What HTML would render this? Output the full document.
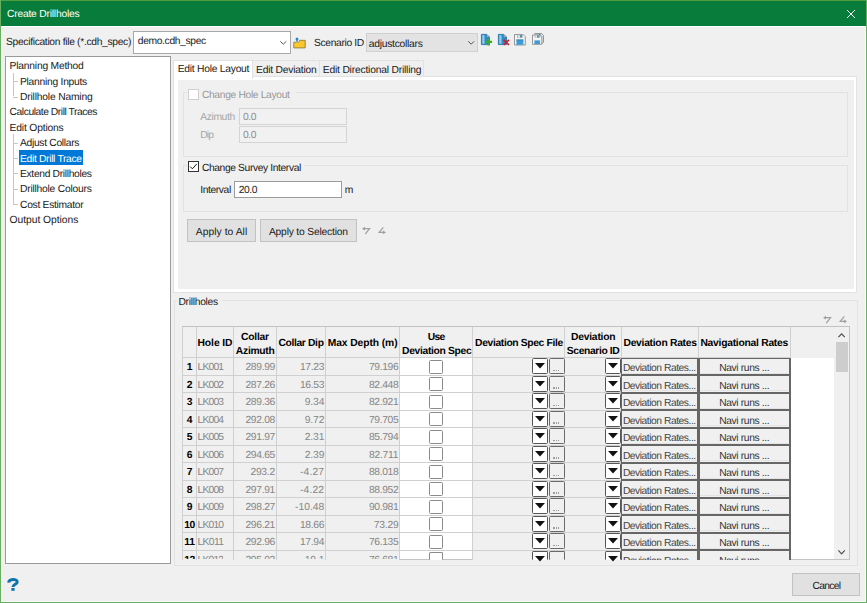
<!DOCTYPE html>
<html><head><meta charset="utf-8"><title>Create Drillholes</title>
<style>
html,body{margin:0;padding:0;}
body{width:867px;height:603px;overflow:hidden;background:#f0f0f0;position:relative;font-family:"Liberation Sans",sans-serif;font-size:10.3px;color:#1a1a1a;text-rendering:geometricPrecision;}
.b{position:absolute;box-sizing:border-box;}
.t{position:absolute;white-space:pre;line-height:13px;}
svg{position:absolute;overflow:visible;}
</style></head><body>
<div class="b" style="left:0.00px;top:0.00px;width:867.00px;height:25.60px;background:#077c3b;"></div>
<div class="b" style="left:0.00px;top:0.00px;width:867.00px;height:1.10px;background:#4f9d3f;"></div>
<div class="b" style="left:0.00px;top:25.60px;width:867.00px;height:1.60px;background:#ffffff;"></div>
<div class="b" style="left:0.00px;top:26.00px;width:2.20px;height:577.00px;background:#fbfbfb;"></div>
<div class="b" style="left:864.80px;top:26.00px;width:2.20px;height:577.00px;background:#fbfbfb;"></div>
<div class="b" style="left:0.00px;top:601.10px;width:867.00px;height:1.90px;background:#fbfbfb;"></div>
<div class="b" style="left:0.00px;top:0.00px;width:1.00px;height:603.00px;background:#68b061;"></div>
<div class="b" style="left:866.00px;top:0.00px;width:1.00px;height:603.00px;background:#68b061;"></div>
<div class="b" style="left:0.00px;top:602.00px;width:867.00px;height:1.00px;background:#68b061;"></div>
<svg style="left:847px;top:10px" width="8" height="8" viewBox="0 0 8 8"><path d="M0 0L8 8M8 0L0 8" stroke="#fff" stroke-width="1" fill="none"/></svg>
<div class="b" style="left:133.00px;top:31.00px;width:158.00px;height:22.50px;background:#fff;border:1px solid #a8a8a8;"></div>
<svg style="left:279.6px;top:40.6px" width="6.6" height="3.6" viewBox="0 0 6.6 3.6"><path d="M0.3 0.3L3.3 3.2L6.3 0.3" stroke="#444" stroke-width="0.9" fill="none"/></svg>
<svg style="left:293.3px;top:36.7px" width="12.8" height="11.8" viewBox="0 0 12.8 11.8"><path d="M0.8 5.2H5.6L6.8 3.3H12.2V10.9H0.8Z" fill="#fcc62d" stroke="#8f7d36" stroke-width="0.9" stroke-linejoin="round"/><path d="M4 0L6.4 2.6H5V5H3V2.6H1.6Z" fill="#107fc0" stroke="#e8f2f8" stroke-width="0.5"/></svg>
<div class="b" style="left:365.80px;top:33.00px;width:112.70px;height:18.80px;background:#e3e3e3;border:1px solid #d0d0d0;"></div>
<svg style="left:468px;top:40.6px" width="6.4" height="3.6" viewBox="0 0 6.4 3.6"><path d="M0.3 0.3L3.2 3.2L6.1 0.3" stroke="#444" stroke-width="0.9" fill="none"/></svg>
<svg style="left:481.0px;top:33.9px" width="12" height="12" viewBox="0 0 12 12"><path d="M0.4 0.4H5.8L8.5 3.1V10.6H0.4Z" fill="#2e8bc6" stroke="#1c6ea6" stroke-width="0.8"/><path d="M1.2 1.2H3.6V9.8H1.2Z" fill="#7cc0e8"/><path d="M1.6 2H3.2M1.6 3.8H3.2M1.6 5.6H3.2M1.6 7.4H3.2M1.6 9H3.2" stroke="#b6def5" stroke-width="0.7"/><path d="M5.8 0.4L8.5 3.1H5.8Z" fill="#a8a8a8"/><path d="M7.7 4.5V11.6M4.1 7.9H11.1" stroke="#3fa732" stroke-width="2.2" fill="none"/></svg>
<svg style="left:498.0px;top:33.9px" width="12" height="12" viewBox="0 0 12 12"><path d="M0.4 0.4H5.8L8.5 3.1V10.6H0.4Z" fill="#2e8bc6" stroke="#1c6ea6" stroke-width="0.8"/><path d="M1.2 1.2H3.6V9.8H1.2Z" fill="#7cc0e8"/><path d="M1.6 2H3.2M1.6 3.8H3.2M1.6 5.6H3.2M1.6 7.4H3.2M1.6 9H3.2" stroke="#b6def5" stroke-width="0.7"/><path d="M5.8 0.4L8.5 3.1H5.8Z" fill="#a8a8a8"/><path d="M5.7 5.9L11 11M11 5.9L5.7 11" stroke="#cc1f2b" stroke-width="1.7" fill="none"/></svg>
<svg style="left:514.3px;top:33.5px" width="12" height="11.6" viewBox="0 0 12 11.6"><path d="M0.5 0.5H9.2L11.3 2.6V11H0.5Z" fill="#f4f4f4" stroke="#8c8c8c" stroke-width="0.9"/><rect x="2.4" y="5.6" width="7" height="5.2" fill="#3d9bd6"/><rect x="2.4" y="5.6" width="7" height="0.7" fill="#2b78ad"/><rect x="3" y="0.6" width="5.6" height="3.4" fill="#a9adb0"/><rect x="3.8" y="1.2" width="2" height="2.6" fill="#e8e8e8"/><rect x="6.2" y="1" width="1.7" height="2.2" fill="#2f8dc9"/></svg>
<svg style="left:531.5px;top:33.4px" width="12" height="11.8" viewBox="0 0 12 11.8"><path d="M2.4 0.5H9.6L11.5 2.4V9.4L10 10.6" fill="#e2e2e2" stroke="#8c8c8c" stroke-width="0.9"/><path d="M0.5 2H8.2L9.8 3.6V11.3H0.5Z" fill="#f4f4f4" stroke="#8c8c8c" stroke-width="0.9"/><rect x="2.4" y="7.4" width="5.6" height="3.6" fill="#3d9bd6"/><rect x="2.6" y="1.2" width="5.8" height="3.4" fill="#a9adb0"/><rect x="3.4" y="2.6" width="1.8" height="1.8" fill="#e8e8e8"/><rect x="5.2" y="2.6" width="1.5" height="2" fill="#2f8dc9"/><rect x="7" y="0.9" width="1.3" height="1.4" fill="#2f8dc9"/></svg>
<div class="b" style="left:5.40px;top:56.00px;width:165.80px;height:508.00px;background:#fff;border:1px solid #9a9a9a;"></div>
<div class="b" style="left:18.50px;top:150.40px;width:64.00px;height:14.40px;background:#0078d7;"></div>
<div class="b" style="left:13.40px;top:81.27px;width:4.80px;height:0.90px;background:#c6c6c6;"></div>
<div class="b" style="left:13.40px;top:96.64px;width:4.80px;height:0.90px;background:#c6c6c6;"></div>
<div class="b" style="left:13.40px;top:142.75px;width:4.80px;height:0.90px;background:#c6c6c6;"></div>
<div class="b" style="left:13.40px;top:158.12px;width:4.80px;height:0.90px;background:#c6c6c6;"></div>
<div class="b" style="left:13.40px;top:173.49px;width:4.80px;height:0.90px;background:#c6c6c6;"></div>
<div class="b" style="left:13.40px;top:188.86px;width:4.80px;height:0.90px;background:#c6c6c6;"></div>
<div class="b" style="left:13.40px;top:204.23px;width:4.80px;height:0.90px;background:#c6c6c6;"></div>
<div class="b" style="left:13.20px;top:72.50px;width:0.90px;height:23.70px;background:#c6c6c6;"></div>
<div class="b" style="left:13.20px;top:134.00px;width:0.90px;height:69.80px;background:#c6c6c6;"></div>
<div class="b" style="left:172.80px;top:76.00px;width:684.00px;height:217.00px;background:#fff;border:1px solid #e2e2e2;"></div>
<div class="b" style="left:177.80px;top:80.00px;width:676.40px;height:209.40px;background:#f0f0f0;"></div>
<div class="b" style="left:172.80px;top:59.60px;width:80.50px;height:19.00px;background:#fff;border:1px solid #e2e2e2;border-bottom:none;"></div>
<div class="b" style="left:253.30px;top:60.40px;width:66.60px;height:15.80px;background:#f0f0f0;border:1px solid #e2e2e2;border-bottom:none;border-left:none;"></div>
<div class="b" style="left:319.90px;top:60.40px;width:104.60px;height:15.80px;background:#f0f0f0;border:1px solid #e2e2e2;border-bottom:none;border-left:none;"></div>
<div class="b" style="left:183.30px;top:92.00px;width:665.00px;height:65.20px;border:1px solid #e2e2e2;"></div>
<div class="b" style="left:186.50px;top:88.00px;width:109.00px;height:12.00px;background:#f0f0f0;"></div>
<div class="b" style="left:188.30px;top:88.60px;width:11.00px;height:11.00px;background:#fff;border:1px solid #cfcfcf;"></div>
<div class="b" style="left:238.70px;top:108.00px;width:108.00px;height:17.20px;background:#f1f1f1;border:1px solid #d4d4d4;"></div>
<div class="b" style="left:238.70px;top:125.80px;width:108.00px;height:17.00px;background:#f1f1f1;border:1px solid #d4d4d4;"></div>
<div class="b" style="left:183.30px;top:165.00px;width:665.00px;height:47.20px;border:1px solid #e2e2e2;"></div>
<div class="b" style="left:186.50px;top:160.50px;width:117.00px;height:12.50px;background:#f0f0f0;"></div>
<div class="b" style="left:188.30px;top:161.30px;width:11.00px;height:11.00px;background:#fff;border:1px solid #333;"></div>
<svg style="left:188.3px;top:161.3px" width="11" height="11" viewBox="0 0 11 11"><path d="M2.2 5.6L4.4 7.8L8.8 2.9" stroke="#111" stroke-width="1" fill="none"/></svg>
<div class="b" style="left:234.30px;top:180.50px;width:108.00px;height:17.70px;background:#fff;border:1px solid #9c9c9c;"></div>
<div class="b" style="left:187.00px;top:219.10px;width:69.00px;height:22.60px;background:#e1e1e1;border:1px solid #c2c2c2;"></div>
<div class="b" style="left:260.00px;top:219.10px;width:96.80px;height:22.60px;background:#e1e1e1;border:1px solid #c2c2c2;"></div>
<svg style="left:362.0px;top:226.7px" width="8.2" height="7.8" viewBox="0 0 8.2 7.8"><path d="M1.2 1.6H7.6L3.2 7.2" stroke="#a0a0a0" stroke-width="1.25" fill="none"/><path d="M0 1.7L3 -0.2V3.6Z" fill="#a0a0a0"/></svg>
<svg style="left:378.2px;top:226.9px" width="8" height="7.4" viewBox="0 0 8 7.4"><path d="M5.3 0.4L1.2 5.4H6.6" stroke="#a0a0a0" stroke-width="1.25" fill="none"/><path d="M8 5.4L5 3.5V7.3Z" fill="#a0a0a0"/></svg>
<div class="b" style="left:173.60px;top:300.30px;width:684.00px;height:266.00px;border:1px solid #e2e2e2;"></div>
<div class="b" style="left:176.50px;top:295.00px;width:45.00px;height:12.00px;background:#f0f0f0;"></div>
<svg style="left:822.6px;top:315.6px" width="8.2" height="7.8" viewBox="0 0 8.2 7.8"><path d="M1.2 1.6H7.6L3.2 7.2" stroke="#a0a0a0" stroke-width="1.25" fill="none"/><path d="M0 1.7L3 -0.2V3.6Z" fill="#a0a0a0"/></svg>
<svg style="left:838.8px;top:315.8px" width="8" height="7.4" viewBox="0 0 8 7.4"><path d="M5.3 0.4L1.2 5.4H6.6" stroke="#a0a0a0" stroke-width="1.25" fill="none"/><path d="M8 5.4L5 3.5V7.3Z" fill="#a0a0a0"/></svg>
<div class="b" style="left:181.60px;top:326.40px;width:668.20px;height:234.00px;background:#fff;border:1px solid #c4c4c4;"></div>
<div class="b" style="left:181.60px;top:326.40px;width:668.20px;height:1.80px;background:#c2c2c2;"></div>
<div class="b" style="left:181.60px;top:326.40px;width:1.60px;height:234.00px;background:#c2c2c2;"></div>
<div class="b" style="left:182.60px;top:327.40px;width:651.80px;height:30.40px;background:#f0f0f0;"></div>
<div class="b" style="left:834.30px;top:327.40px;width:14.60px;height:232.00px;background:#f0f0f0;"></div>
<div class="b" style="left:835.80px;top:342.00px;width:12.20px;height:29.60px;background:#cdcdcd;"></div>
<svg style="left:838.3px;top:332.8px" width="7.2" height="4.6" viewBox="0 0 7.2 4.6"><path d="M0.4 4.2L3.6 0.8L6.8 4.2" stroke="#505050" stroke-width="1.2" fill="none"/></svg>
<svg style="left:838.3px;top:550.4px" width="7.2" height="4.6" viewBox="0 0 7.2 4.6"><path d="M0.4 0.4L3.6 3.8L6.8 0.4" stroke="#505050" stroke-width="1.2" fill="none"/></svg>
<div class="b" style="left:182.40px;top:357.50px;width:217.20px;height:17.50px;background:#f0f0f0;"></div>
<div class="b" style="left:472.30px;top:357.50px;width:149.20px;height:17.50px;background:#f0f0f0;"></div>
<div class="b" style="left:182.40px;top:375.00px;width:217.20px;height:17.50px;background:#f0f0f0;"></div>
<div class="b" style="left:472.30px;top:375.00px;width:149.20px;height:17.50px;background:#f0f0f0;"></div>
<div class="b" style="left:182.40px;top:392.50px;width:217.20px;height:17.50px;background:#f0f0f0;"></div>
<div class="b" style="left:472.30px;top:392.50px;width:149.20px;height:17.50px;background:#f0f0f0;"></div>
<div class="b" style="left:182.40px;top:410.00px;width:217.20px;height:17.50px;background:#f0f0f0;"></div>
<div class="b" style="left:472.30px;top:410.00px;width:149.20px;height:17.50px;background:#f0f0f0;"></div>
<div class="b" style="left:182.40px;top:427.50px;width:217.20px;height:17.50px;background:#f0f0f0;"></div>
<div class="b" style="left:472.30px;top:427.50px;width:149.20px;height:17.50px;background:#f0f0f0;"></div>
<div class="b" style="left:182.40px;top:445.00px;width:217.20px;height:17.50px;background:#f0f0f0;"></div>
<div class="b" style="left:472.30px;top:445.00px;width:149.20px;height:17.50px;background:#f0f0f0;"></div>
<div class="b" style="left:182.40px;top:462.50px;width:217.20px;height:17.50px;background:#f0f0f0;"></div>
<div class="b" style="left:472.30px;top:462.50px;width:149.20px;height:17.50px;background:#f0f0f0;"></div>
<div class="b" style="left:182.40px;top:480.00px;width:217.20px;height:17.50px;background:#f0f0f0;"></div>
<div class="b" style="left:472.30px;top:480.00px;width:149.20px;height:17.50px;background:#f0f0f0;"></div>
<div class="b" style="left:182.40px;top:497.50px;width:217.20px;height:17.50px;background:#f0f0f0;"></div>
<div class="b" style="left:472.30px;top:497.50px;width:149.20px;height:17.50px;background:#f0f0f0;"></div>
<div class="b" style="left:182.40px;top:515.00px;width:217.20px;height:17.50px;background:#f0f0f0;"></div>
<div class="b" style="left:472.30px;top:515.00px;width:149.20px;height:17.50px;background:#f0f0f0;"></div>
<div class="b" style="left:182.40px;top:532.50px;width:217.20px;height:17.50px;background:#f0f0f0;"></div>
<div class="b" style="left:472.30px;top:532.50px;width:149.20px;height:17.50px;background:#f0f0f0;"></div>
<div class="b" style="left:182.40px;top:550.00px;width:217.20px;height:9.60px;background:#f0f0f0;"></div>
<div class="b" style="left:472.30px;top:550.00px;width:149.20px;height:9.60px;background:#f0f0f0;"></div>
<div class="b" style="left:182.40px;top:357.00px;width:607.60px;height:1.00px;background:#d0d0d0;"></div>
<div class="b" style="left:182.40px;top:374.50px;width:607.60px;height:1.00px;background:#d0d0d0;"></div>
<div class="b" style="left:182.40px;top:392.00px;width:607.60px;height:1.00px;background:#d0d0d0;"></div>
<div class="b" style="left:182.40px;top:409.50px;width:607.60px;height:1.00px;background:#d0d0d0;"></div>
<div class="b" style="left:182.40px;top:427.00px;width:607.60px;height:1.00px;background:#d0d0d0;"></div>
<div class="b" style="left:182.40px;top:444.50px;width:607.60px;height:1.00px;background:#d0d0d0;"></div>
<div class="b" style="left:182.40px;top:462.00px;width:607.60px;height:1.00px;background:#d0d0d0;"></div>
<div class="b" style="left:182.40px;top:479.50px;width:607.60px;height:1.00px;background:#d0d0d0;"></div>
<div class="b" style="left:182.40px;top:497.00px;width:607.60px;height:1.00px;background:#d0d0d0;"></div>
<div class="b" style="left:182.40px;top:514.50px;width:607.60px;height:1.00px;background:#d0d0d0;"></div>
<div class="b" style="left:182.40px;top:532.00px;width:607.60px;height:1.00px;background:#d0d0d0;"></div>
<div class="b" style="left:182.40px;top:549.50px;width:607.60px;height:1.00px;background:#d0d0d0;"></div>
<div class="b" style="left:195.70px;top:327.40px;width:1.00px;height:232.20px;background:#d0d0d0;"></div>
<div class="b" style="left:233.20px;top:327.40px;width:1.00px;height:232.20px;background:#d0d0d0;"></div>
<div class="b" style="left:275.60px;top:327.40px;width:1.00px;height:232.20px;background:#d0d0d0;"></div>
<div class="b" style="left:324.80px;top:327.40px;width:1.00px;height:232.20px;background:#d0d0d0;"></div>
<div class="b" style="left:399.10px;top:327.40px;width:1.00px;height:232.20px;background:#d0d0d0;"></div>
<div class="b" style="left:471.80px;top:327.40px;width:1.00px;height:232.20px;background:#d0d0d0;"></div>
<div class="b" style="left:564.10px;top:327.40px;width:1.00px;height:232.20px;background:#d0d0d0;"></div>
<div class="b" style="left:621.00px;top:327.40px;width:1.00px;height:232.20px;background:#d0d0d0;"></div>
<div class="b" style="left:698.10px;top:327.40px;width:1.00px;height:232.20px;background:#d0d0d0;"></div>
<div class="b" style="left:789.50px;top:327.40px;width:1.00px;height:232.20px;background:#d0d0d0;"></div>
<div class="b" style="left:182.10px;top:327.40px;width:0.80px;height:232.20px;background:#d0d0d0;"></div>
<div class="b" style="left:429.30px;top:359.70px;width:14.00px;height:14.00px;background:#fff;border:1px solid #8a8a8a;border-radius:1.5px;"></div>
<div class="b" style="left:531.80px;top:358.40px;width:15.80px;height:16.00px;background:#fff;border:1px solid #555;border-radius:1.5px;"></div>
<svg style="left:534.7px;top:363.4px" width="10" height="5.6" viewBox="0 0 10 5.6"><path d="M0 0H10L5 5.6Z" fill="#111"/></svg>
<div class="b" style="left:605.30px;top:358.40px;width:15.80px;height:16.00px;background:#fff;border:1px solid #555;border-radius:1.5px;"></div>
<svg style="left:608.2px;top:363.4px" width="10" height="5.6" viewBox="0 0 10 5.6"><path d="M0 0H10L5 5.6Z" fill="#111"/></svg>
<div class="b" style="left:549.00px;top:358.40px;width:15.60px;height:16.00px;background:#f0f0f0;border:1px solid #6a6a6a;border-radius:1.5px;"></div>
<div class="b" style="left:553.30px;top:369.80px;width:1.30px;height:1.40px;background:#9e9e9e;"></div>
<div class="b" style="left:555.60px;top:369.80px;width:1.30px;height:1.40px;background:#9e9e9e;"></div>
<div class="b" style="left:557.90px;top:369.80px;width:1.30px;height:1.40px;background:#9e9e9e;"></div>
<div class="b" style="left:621.50px;top:357.50px;width:168.50px;height:17.50px;background:#f0f0f0;"></div>
<div class="b" style="left:623.00px;top:372.70px;width:74.10px;height:0.80px;background:#e3e3e3;"></div>
<div class="b" style="left:700.10px;top:372.70px;width:88.40px;height:0.80px;background:#e3e3e3;"></div>
<div class="b" style="left:429.30px;top:377.20px;width:14.00px;height:14.00px;background:#fff;border:1px solid #8a8a8a;border-radius:1.5px;"></div>
<div class="b" style="left:531.80px;top:375.90px;width:15.80px;height:16.00px;background:#fff;border:1px solid #555;border-radius:1.5px;"></div>
<svg style="left:534.7px;top:380.9px" width="10" height="5.6" viewBox="0 0 10 5.6"><path d="M0 0H10L5 5.6Z" fill="#111"/></svg>
<div class="b" style="left:605.30px;top:375.90px;width:15.80px;height:16.00px;background:#fff;border:1px solid #555;border-radius:1.5px;"></div>
<svg style="left:608.2px;top:380.9px" width="10" height="5.6" viewBox="0 0 10 5.6"><path d="M0 0H10L5 5.6Z" fill="#111"/></svg>
<div class="b" style="left:549.00px;top:375.90px;width:15.60px;height:16.00px;background:#f0f0f0;border:1px solid #6a6a6a;border-radius:1.5px;"></div>
<div class="b" style="left:553.30px;top:387.30px;width:1.30px;height:1.40px;background:#9e9e9e;"></div>
<div class="b" style="left:555.60px;top:387.30px;width:1.30px;height:1.40px;background:#9e9e9e;"></div>
<div class="b" style="left:557.90px;top:387.30px;width:1.30px;height:1.40px;background:#9e9e9e;"></div>
<div class="b" style="left:621.50px;top:375.00px;width:168.50px;height:17.50px;background:#f0f0f0;"></div>
<div class="b" style="left:623.00px;top:390.20px;width:74.10px;height:0.80px;background:#e3e3e3;"></div>
<div class="b" style="left:700.10px;top:390.20px;width:88.40px;height:0.80px;background:#e3e3e3;"></div>
<div class="b" style="left:429.30px;top:394.70px;width:14.00px;height:14.00px;background:#fff;border:1px solid #8a8a8a;border-radius:1.5px;"></div>
<div class="b" style="left:531.80px;top:393.40px;width:15.80px;height:16.00px;background:#fff;border:1px solid #555;border-radius:1.5px;"></div>
<svg style="left:534.7px;top:398.4px" width="10" height="5.6" viewBox="0 0 10 5.6"><path d="M0 0H10L5 5.6Z" fill="#111"/></svg>
<div class="b" style="left:605.30px;top:393.40px;width:15.80px;height:16.00px;background:#fff;border:1px solid #555;border-radius:1.5px;"></div>
<svg style="left:608.2px;top:398.4px" width="10" height="5.6" viewBox="0 0 10 5.6"><path d="M0 0H10L5 5.6Z" fill="#111"/></svg>
<div class="b" style="left:549.00px;top:393.40px;width:15.60px;height:16.00px;background:#f0f0f0;border:1px solid #6a6a6a;border-radius:1.5px;"></div>
<div class="b" style="left:553.30px;top:404.80px;width:1.30px;height:1.40px;background:#9e9e9e;"></div>
<div class="b" style="left:555.60px;top:404.80px;width:1.30px;height:1.40px;background:#9e9e9e;"></div>
<div class="b" style="left:557.90px;top:404.80px;width:1.30px;height:1.40px;background:#9e9e9e;"></div>
<div class="b" style="left:621.50px;top:392.50px;width:168.50px;height:17.50px;background:#f0f0f0;"></div>
<div class="b" style="left:623.00px;top:407.70px;width:74.10px;height:0.80px;background:#e3e3e3;"></div>
<div class="b" style="left:700.10px;top:407.70px;width:88.40px;height:0.80px;background:#e3e3e3;"></div>
<div class="b" style="left:429.30px;top:412.20px;width:14.00px;height:14.00px;background:#fff;border:1px solid #8a8a8a;border-radius:1.5px;"></div>
<div class="b" style="left:531.80px;top:410.90px;width:15.80px;height:16.00px;background:#fff;border:1px solid #555;border-radius:1.5px;"></div>
<svg style="left:534.7px;top:415.9px" width="10" height="5.6" viewBox="0 0 10 5.6"><path d="M0 0H10L5 5.6Z" fill="#111"/></svg>
<div class="b" style="left:605.30px;top:410.90px;width:15.80px;height:16.00px;background:#fff;border:1px solid #555;border-radius:1.5px;"></div>
<svg style="left:608.2px;top:415.9px" width="10" height="5.6" viewBox="0 0 10 5.6"><path d="M0 0H10L5 5.6Z" fill="#111"/></svg>
<div class="b" style="left:549.00px;top:410.90px;width:15.60px;height:16.00px;background:#f0f0f0;border:1px solid #6a6a6a;border-radius:1.5px;"></div>
<div class="b" style="left:553.30px;top:422.30px;width:1.30px;height:1.40px;background:#9e9e9e;"></div>
<div class="b" style="left:555.60px;top:422.30px;width:1.30px;height:1.40px;background:#9e9e9e;"></div>
<div class="b" style="left:557.90px;top:422.30px;width:1.30px;height:1.40px;background:#9e9e9e;"></div>
<div class="b" style="left:621.50px;top:410.00px;width:168.50px;height:17.50px;background:#f0f0f0;"></div>
<div class="b" style="left:623.00px;top:425.20px;width:74.10px;height:0.80px;background:#e3e3e3;"></div>
<div class="b" style="left:700.10px;top:425.20px;width:88.40px;height:0.80px;background:#e3e3e3;"></div>
<div class="b" style="left:429.30px;top:429.70px;width:14.00px;height:14.00px;background:#fff;border:1px solid #8a8a8a;border-radius:1.5px;"></div>
<div class="b" style="left:531.80px;top:428.40px;width:15.80px;height:16.00px;background:#fff;border:1px solid #555;border-radius:1.5px;"></div>
<svg style="left:534.7px;top:433.4px" width="10" height="5.6" viewBox="0 0 10 5.6"><path d="M0 0H10L5 5.6Z" fill="#111"/></svg>
<div class="b" style="left:605.30px;top:428.40px;width:15.80px;height:16.00px;background:#fff;border:1px solid #555;border-radius:1.5px;"></div>
<svg style="left:608.2px;top:433.4px" width="10" height="5.6" viewBox="0 0 10 5.6"><path d="M0 0H10L5 5.6Z" fill="#111"/></svg>
<div class="b" style="left:549.00px;top:428.40px;width:15.60px;height:16.00px;background:#f0f0f0;border:1px solid #6a6a6a;border-radius:1.5px;"></div>
<div class="b" style="left:553.30px;top:439.80px;width:1.30px;height:1.40px;background:#9e9e9e;"></div>
<div class="b" style="left:555.60px;top:439.80px;width:1.30px;height:1.40px;background:#9e9e9e;"></div>
<div class="b" style="left:557.90px;top:439.80px;width:1.30px;height:1.40px;background:#9e9e9e;"></div>
<div class="b" style="left:621.50px;top:427.50px;width:168.50px;height:17.50px;background:#f0f0f0;"></div>
<div class="b" style="left:623.00px;top:442.70px;width:74.10px;height:0.80px;background:#e3e3e3;"></div>
<div class="b" style="left:700.10px;top:442.70px;width:88.40px;height:0.80px;background:#e3e3e3;"></div>
<div class="b" style="left:429.30px;top:447.20px;width:14.00px;height:14.00px;background:#fff;border:1px solid #8a8a8a;border-radius:1.5px;"></div>
<div class="b" style="left:531.80px;top:445.90px;width:15.80px;height:16.00px;background:#fff;border:1px solid #555;border-radius:1.5px;"></div>
<svg style="left:534.7px;top:450.9px" width="10" height="5.6" viewBox="0 0 10 5.6"><path d="M0 0H10L5 5.6Z" fill="#111"/></svg>
<div class="b" style="left:605.30px;top:445.90px;width:15.80px;height:16.00px;background:#fff;border:1px solid #555;border-radius:1.5px;"></div>
<svg style="left:608.2px;top:450.9px" width="10" height="5.6" viewBox="0 0 10 5.6"><path d="M0 0H10L5 5.6Z" fill="#111"/></svg>
<div class="b" style="left:549.00px;top:445.90px;width:15.60px;height:16.00px;background:#f0f0f0;border:1px solid #6a6a6a;border-radius:1.5px;"></div>
<div class="b" style="left:553.30px;top:457.30px;width:1.30px;height:1.40px;background:#9e9e9e;"></div>
<div class="b" style="left:555.60px;top:457.30px;width:1.30px;height:1.40px;background:#9e9e9e;"></div>
<div class="b" style="left:557.90px;top:457.30px;width:1.30px;height:1.40px;background:#9e9e9e;"></div>
<div class="b" style="left:621.50px;top:445.00px;width:168.50px;height:17.50px;background:#f0f0f0;"></div>
<div class="b" style="left:623.00px;top:460.20px;width:74.10px;height:0.80px;background:#e3e3e3;"></div>
<div class="b" style="left:700.10px;top:460.20px;width:88.40px;height:0.80px;background:#e3e3e3;"></div>
<div class="b" style="left:429.30px;top:464.70px;width:14.00px;height:14.00px;background:#fff;border:1px solid #8a8a8a;border-radius:1.5px;"></div>
<div class="b" style="left:531.80px;top:463.40px;width:15.80px;height:16.00px;background:#fff;border:1px solid #555;border-radius:1.5px;"></div>
<svg style="left:534.7px;top:468.4px" width="10" height="5.6" viewBox="0 0 10 5.6"><path d="M0 0H10L5 5.6Z" fill="#111"/></svg>
<div class="b" style="left:605.30px;top:463.40px;width:15.80px;height:16.00px;background:#fff;border:1px solid #555;border-radius:1.5px;"></div>
<svg style="left:608.2px;top:468.4px" width="10" height="5.6" viewBox="0 0 10 5.6"><path d="M0 0H10L5 5.6Z" fill="#111"/></svg>
<div class="b" style="left:549.00px;top:463.40px;width:15.60px;height:16.00px;background:#f0f0f0;border:1px solid #6a6a6a;border-radius:1.5px;"></div>
<div class="b" style="left:553.30px;top:474.80px;width:1.30px;height:1.40px;background:#9e9e9e;"></div>
<div class="b" style="left:555.60px;top:474.80px;width:1.30px;height:1.40px;background:#9e9e9e;"></div>
<div class="b" style="left:557.90px;top:474.80px;width:1.30px;height:1.40px;background:#9e9e9e;"></div>
<div class="b" style="left:621.50px;top:462.50px;width:168.50px;height:17.50px;background:#f0f0f0;"></div>
<div class="b" style="left:623.00px;top:477.70px;width:74.10px;height:0.80px;background:#e3e3e3;"></div>
<div class="b" style="left:700.10px;top:477.70px;width:88.40px;height:0.80px;background:#e3e3e3;"></div>
<div class="b" style="left:429.30px;top:482.20px;width:14.00px;height:14.00px;background:#fff;border:1px solid #8a8a8a;border-radius:1.5px;"></div>
<div class="b" style="left:531.80px;top:480.90px;width:15.80px;height:16.00px;background:#fff;border:1px solid #555;border-radius:1.5px;"></div>
<svg style="left:534.7px;top:485.9px" width="10" height="5.6" viewBox="0 0 10 5.6"><path d="M0 0H10L5 5.6Z" fill="#111"/></svg>
<div class="b" style="left:605.30px;top:480.90px;width:15.80px;height:16.00px;background:#fff;border:1px solid #555;border-radius:1.5px;"></div>
<svg style="left:608.2px;top:485.9px" width="10" height="5.6" viewBox="0 0 10 5.6"><path d="M0 0H10L5 5.6Z" fill="#111"/></svg>
<div class="b" style="left:549.00px;top:480.90px;width:15.60px;height:16.00px;background:#f0f0f0;border:1px solid #6a6a6a;border-radius:1.5px;"></div>
<div class="b" style="left:553.30px;top:492.30px;width:1.30px;height:1.40px;background:#9e9e9e;"></div>
<div class="b" style="left:555.60px;top:492.30px;width:1.30px;height:1.40px;background:#9e9e9e;"></div>
<div class="b" style="left:557.90px;top:492.30px;width:1.30px;height:1.40px;background:#9e9e9e;"></div>
<div class="b" style="left:621.50px;top:480.00px;width:168.50px;height:17.50px;background:#f0f0f0;"></div>
<div class="b" style="left:623.00px;top:495.20px;width:74.10px;height:0.80px;background:#e3e3e3;"></div>
<div class="b" style="left:700.10px;top:495.20px;width:88.40px;height:0.80px;background:#e3e3e3;"></div>
<div class="b" style="left:429.30px;top:499.70px;width:14.00px;height:14.00px;background:#fff;border:1px solid #8a8a8a;border-radius:1.5px;"></div>
<div class="b" style="left:531.80px;top:498.40px;width:15.80px;height:16.00px;background:#fff;border:1px solid #555;border-radius:1.5px;"></div>
<svg style="left:534.7px;top:503.4px" width="10" height="5.6" viewBox="0 0 10 5.6"><path d="M0 0H10L5 5.6Z" fill="#111"/></svg>
<div class="b" style="left:605.30px;top:498.40px;width:15.80px;height:16.00px;background:#fff;border:1px solid #555;border-radius:1.5px;"></div>
<svg style="left:608.2px;top:503.4px" width="10" height="5.6" viewBox="0 0 10 5.6"><path d="M0 0H10L5 5.6Z" fill="#111"/></svg>
<div class="b" style="left:549.00px;top:498.40px;width:15.60px;height:16.00px;background:#f0f0f0;border:1px solid #6a6a6a;border-radius:1.5px;"></div>
<div class="b" style="left:553.30px;top:509.80px;width:1.30px;height:1.40px;background:#9e9e9e;"></div>
<div class="b" style="left:555.60px;top:509.80px;width:1.30px;height:1.40px;background:#9e9e9e;"></div>
<div class="b" style="left:557.90px;top:509.80px;width:1.30px;height:1.40px;background:#9e9e9e;"></div>
<div class="b" style="left:621.50px;top:497.50px;width:168.50px;height:17.50px;background:#f0f0f0;"></div>
<div class="b" style="left:623.00px;top:512.70px;width:74.10px;height:0.80px;background:#e3e3e3;"></div>
<div class="b" style="left:700.10px;top:512.70px;width:88.40px;height:0.80px;background:#e3e3e3;"></div>
<div class="b" style="left:429.30px;top:517.20px;width:14.00px;height:14.00px;background:#fff;border:1px solid #8a8a8a;border-radius:1.5px;"></div>
<div class="b" style="left:531.80px;top:515.90px;width:15.80px;height:16.00px;background:#fff;border:1px solid #555;border-radius:1.5px;"></div>
<svg style="left:534.7px;top:520.9px" width="10" height="5.6" viewBox="0 0 10 5.6"><path d="M0 0H10L5 5.6Z" fill="#111"/></svg>
<div class="b" style="left:605.30px;top:515.90px;width:15.80px;height:16.00px;background:#fff;border:1px solid #555;border-radius:1.5px;"></div>
<svg style="left:608.2px;top:520.9px" width="10" height="5.6" viewBox="0 0 10 5.6"><path d="M0 0H10L5 5.6Z" fill="#111"/></svg>
<div class="b" style="left:549.00px;top:515.90px;width:15.60px;height:16.00px;background:#f0f0f0;border:1px solid #6a6a6a;border-radius:1.5px;"></div>
<div class="b" style="left:553.30px;top:527.30px;width:1.30px;height:1.40px;background:#9e9e9e;"></div>
<div class="b" style="left:555.60px;top:527.30px;width:1.30px;height:1.40px;background:#9e9e9e;"></div>
<div class="b" style="left:557.90px;top:527.30px;width:1.30px;height:1.40px;background:#9e9e9e;"></div>
<div class="b" style="left:621.50px;top:515.00px;width:168.50px;height:17.50px;background:#f0f0f0;"></div>
<div class="b" style="left:623.00px;top:530.20px;width:74.10px;height:0.80px;background:#e3e3e3;"></div>
<div class="b" style="left:700.10px;top:530.20px;width:88.40px;height:0.80px;background:#e3e3e3;"></div>
<div class="b" style="left:429.30px;top:534.70px;width:14.00px;height:14.00px;background:#fff;border:1px solid #8a8a8a;border-radius:1.5px;"></div>
<div class="b" style="left:531.80px;top:533.40px;width:15.80px;height:16.00px;background:#fff;border:1px solid #555;border-radius:1.5px;"></div>
<svg style="left:534.7px;top:538.4px" width="10" height="5.6" viewBox="0 0 10 5.6"><path d="M0 0H10L5 5.6Z" fill="#111"/></svg>
<div class="b" style="left:605.30px;top:533.40px;width:15.80px;height:16.00px;background:#fff;border:1px solid #555;border-radius:1.5px;"></div>
<svg style="left:608.2px;top:538.4px" width="10" height="5.6" viewBox="0 0 10 5.6"><path d="M0 0H10L5 5.6Z" fill="#111"/></svg>
<div class="b" style="left:549.00px;top:533.40px;width:15.60px;height:16.00px;background:#f0f0f0;border:1px solid #6a6a6a;border-radius:1.5px;"></div>
<div class="b" style="left:553.30px;top:544.80px;width:1.30px;height:1.40px;background:#9e9e9e;"></div>
<div class="b" style="left:555.60px;top:544.80px;width:1.30px;height:1.40px;background:#9e9e9e;"></div>
<div class="b" style="left:557.90px;top:544.80px;width:1.30px;height:1.40px;background:#9e9e9e;"></div>
<div class="b" style="left:621.50px;top:532.50px;width:168.50px;height:17.50px;background:#f0f0f0;"></div>
<div class="b" style="left:623.00px;top:547.70px;width:74.10px;height:0.80px;background:#e3e3e3;"></div>
<div class="b" style="left:700.10px;top:547.70px;width:88.40px;height:0.80px;background:#e3e3e3;"></div>
<div class="b" style="left:429.30px;top:552.20px;width:14.00px;height:7.40px;background:#fff;border:1px solid #8a8a8a;border-radius:1.5px;border-bottom:none;"></div>
<div class="b" style="left:531.80px;top:550.90px;width:15.80px;height:8.70px;background:#fff;border:1px solid #555;border-radius:1.5px;border-bottom:none;"></div>
<svg style="left:534.7px;top:555.9px" width="10" height="3.7" viewBox="0 0 10 3.7"><path d="M0 0H10L5 5.6Z" fill="#111"/></svg>
<div class="b" style="left:605.30px;top:550.90px;width:15.80px;height:8.70px;background:#fff;border:1px solid #555;border-radius:1.5px;border-bottom:none;"></div>
<svg style="left:608.2px;top:555.9px" width="10" height="3.7" viewBox="0 0 10 3.7"><path d="M0 0H10L5 5.6Z" fill="#111"/></svg>
<div class="b" style="left:549.00px;top:550.90px;width:15.60px;height:8.70px;background:#f0f0f0;border:1px solid #6a6a6a;border-radius:1.5px;border-bottom:none;"></div>
<div class="b" style="left:621.50px;top:550.00px;width:168.50px;height:9.60px;background:#f0f0f0;"></div>
<div class="b" style="left:620.90px;top:357.70px;width:169.70px;height:1.50px;background:#666666;"></div>
<div class="b" style="left:620.90px;top:374.40px;width:169.70px;height:2.00px;background:#666666;"></div>
<div class="b" style="left:620.90px;top:391.90px;width:169.70px;height:2.00px;background:#666666;"></div>
<div class="b" style="left:620.90px;top:409.40px;width:169.70px;height:2.00px;background:#666666;"></div>
<div class="b" style="left:620.90px;top:426.90px;width:169.70px;height:2.00px;background:#666666;"></div>
<div class="b" style="left:620.90px;top:444.40px;width:169.70px;height:2.00px;background:#666666;"></div>
<div class="b" style="left:620.90px;top:461.90px;width:169.70px;height:2.00px;background:#666666;"></div>
<div class="b" style="left:620.90px;top:479.40px;width:169.70px;height:2.00px;background:#666666;"></div>
<div class="b" style="left:620.90px;top:496.90px;width:169.70px;height:2.00px;background:#666666;"></div>
<div class="b" style="left:620.90px;top:514.40px;width:169.70px;height:2.00px;background:#666666;"></div>
<div class="b" style="left:620.90px;top:531.90px;width:169.70px;height:2.00px;background:#666666;"></div>
<div class="b" style="left:620.90px;top:549.40px;width:169.70px;height:2.00px;background:#666666;"></div>
<div class="b" style="left:620.80px;top:357.70px;width:1.50px;height:201.90px;background:#666666;"></div>
<div class="b" style="left:697.40px;top:357.70px;width:2.30px;height:201.90px;background:#666666;"></div>
<div class="b" style="left:789.00px;top:357.70px;width:1.60px;height:201.90px;background:#666666;"></div>
<div class="b" style="left:792.40px;top:573.40px;width:67.70px;height:22.80px;background:#e1e1e1;border:1px solid #c2c2c2;"></div>
<svg style="left:7.3px;top:578.2px" width="12" height="12.8" viewBox="0 0 12 12.8"><path d="M1.8 4.7C1.6 0.8 10.2 0.4 10.2 3.9C10.2 6.3 6 6.3 6 9.1" stroke="#0f73ae" stroke-width="3" fill="none"/><rect x="4.4" y="10" width="3.2" height="2.8" fill="#0f73ae"/></svg>
<span class="t" style="left:7.00px;top:7.80px;letter-spacing:-0.213px;color:#ffffff;">Create Drillholes</span>
<span class="t" style="left:6.00px;top:36.30px;letter-spacing:-0.325px;">Specification file (*.cdh_spec)</span>
<span class="t" style="left:137.80px;top:34.80px;letter-spacing:-0.362px;">demo.cdh_spec</span>
<span class="t" style="left:314.10px;top:36.70px;letter-spacing:-0.374px;">Scenario ID</span>
<span class="t" style="left:368.70px;top:37.80px;letter-spacing:-0.249px;">adjustcollars</span>
<span class="t" style="left:9.60px;top:60.30px;letter-spacing:-0.220px;">Planning Method</span>
<span class="t" style="left:20.00px;top:75.67px;letter-spacing:-0.267px;">Planning Inputs</span>
<span class="t" style="left:20.00px;top:91.04px;letter-spacing:-0.190px;">Drillhole Naming</span>
<span class="t" style="left:9.60px;top:106.41px;letter-spacing:-0.454px;">Calculate Drill Traces</span>
<span class="t" style="left:9.60px;top:121.78px;letter-spacing:-0.174px;">Edit Options</span>
<span class="t" style="left:20.00px;top:137.15px;letter-spacing:-0.309px;">Adjust Collars</span>
<span class="t" style="left:20.00px;top:152.52px;letter-spacing:-0.328px;color:#ffffff;">Edit Drill Trace</span>
<span class="t" style="left:20.00px;top:167.89px;letter-spacing:-0.333px;">Extend Drillholes</span>
<span class="t" style="left:20.00px;top:183.26px;letter-spacing:-0.232px;">Drillhole Colours</span>
<span class="t" style="left:20.00px;top:198.63px;letter-spacing:-0.295px;">Cost Estimator</span>
<span class="t" style="left:9.60px;top:214.00px;letter-spacing:-0.040px;">Output Options</span>
<span class="t" style="left:177.70px;top:63.00px;letter-spacing:-0.254px;">Edit Hole Layout</span>
<span class="t" style="left:256.00px;top:64.00px;letter-spacing:-0.217px;">Edit Deviation</span>
<span class="t" style="left:322.80px;top:64.00px;letter-spacing:-0.203px;">Edit Directional Drilling</span>
<span class="t" style="left:201.90px;top:89.10px;letter-spacing:-0.344px;color:#989898;">Change Hole Layout</span>
<span class="t" style="left:200.20px;top:111.00px;letter-spacing:-0.372px;color:#a6a6a6;">Azimuth</span>
<span class="t" style="left:200.20px;top:128.60px;letter-spacing:-0.818px;color:#a6a6a6;">Dip</span>
<span class="t" style="left:243.10px;top:111.30px;letter-spacing:-0.509px;color:#8c8c8c;">0.0</span>
<span class="t" style="left:243.10px;top:128.90px;letter-spacing:-0.509px;color:#8c8c8c;">0.0</span>
<span class="t" style="left:201.90px;top:162.10px;letter-spacing:-0.391px;">Change Survey Interval</span>
<span class="t" style="left:200.20px;top:183.60px;letter-spacing:-0.398px;">Interval</span>
<span class="t" style="left:238.70px;top:183.80px;letter-spacing:-0.387px;">20.0</span>
<span class="t" style="left:344.80px;top:183.60px;">m</span>
<span class="t" style="left:195.75px;top:225.60px;letter-spacing:0.046px;">Apply to All</span>
<span class="t" style="left:268.90px;top:225.60px;letter-spacing:-0.191px;">Apply to Selection</span>
<span class="t" style="left:178.40px;top:295.50px;letter-spacing:-0.286px;">Drillholes</span>
<span class="t" style="left:197.50px;top:337.40px;letter-spacing:-0.069px;font-weight:bold;color:#000000;">Hole ID</span>
<span class="t" style="left:240.90px;top:330.70px;letter-spacing:-0.198px;font-weight:bold;color:#000000;">Collar</span>
<span class="t" style="left:235.85px;top:344.60px;letter-spacing:-0.273px;font-weight:bold;color:#000000;">Azimuth</span>
<span class="t" style="left:278.40px;top:337.40px;letter-spacing:-0.344px;font-weight:bold;color:#000000;">Collar Dip</span>
<span class="t" style="left:327.70px;top:337.40px;letter-spacing:-0.088px;font-weight:bold;color:#000000;">Max Depth (m)</span>
<span class="t" style="left:427.70px;top:330.70px;letter-spacing:-0.630px;font-weight:bold;color:#000000;">Use</span>
<span class="t" style="left:402.10px;top:344.60px;letter-spacing:-0.331px;font-weight:bold;color:#000000;">Deviation Spec</span>
<span class="t" style="left:475.10px;top:337.40px;letter-spacing:-0.354px;font-weight:bold;color:#000000;">Deviation Spec File</span>
<span class="t" style="left:570.95px;top:330.70px;letter-spacing:-0.207px;font-weight:bold;color:#000000;">Deviation</span>
<span class="t" style="left:566.80px;top:344.60px;letter-spacing:-0.369px;font-weight:bold;color:#000000;">Scenario ID</span>
<span class="t" style="left:623.50px;top:337.40px;letter-spacing:-0.271px;font-weight:bold;color:#000000;">Deviation Rates</span>
<span class="t" style="left:700.40px;top:337.40px;letter-spacing:-0.252px;font-weight:bold;color:#000000;">Navigational Rates</span>
<span class="t" style="left:186.73px;top:361.20px;font-weight:bold;color:#000;">1</span>
<span class="t" style="left:197.50px;top:361.20px;letter-spacing:-0.796px;color:#858585;">LK001</span>
<span class="t" style="left:245.48px;top:361.20px;letter-spacing:-0.330px;color:#858585;">289.99</span>
<span class="t" style="left:299.95px;top:361.20px;letter-spacing:-0.306px;color:#858585;">17.23</span>
<span class="t" style="left:368.88px;top:361.20px;letter-spacing:-0.330px;color:#858585;">79.196</span>
<span class="t" style="left:622.90px;top:362.00px;letter-spacing:-0.471px;color:#454545;">Deviation Rates...</span>
<span class="t" style="left:719.20px;top:362.00px;letter-spacing:-0.380px;color:#333;">Navi runs ...</span>
<span class="t" style="left:186.73px;top:378.70px;font-weight:bold;color:#000;">2</span>
<span class="t" style="left:197.50px;top:378.70px;letter-spacing:-0.796px;color:#858585;">LK002</span>
<span class="t" style="left:245.48px;top:378.70px;letter-spacing:-0.330px;color:#858585;">287.26</span>
<span class="t" style="left:299.95px;top:378.70px;letter-spacing:-0.306px;color:#858585;">16.53</span>
<span class="t" style="left:368.88px;top:378.70px;letter-spacing:-0.330px;color:#858585;">82.448</span>
<span class="t" style="left:622.90px;top:379.50px;letter-spacing:-0.471px;color:#454545;">Deviation Rates...</span>
<span class="t" style="left:719.20px;top:379.50px;letter-spacing:-0.380px;color:#333;">Navi runs ...</span>
<span class="t" style="left:186.73px;top:396.20px;font-weight:bold;color:#000;">3</span>
<span class="t" style="left:197.50px;top:396.20px;letter-spacing:-0.796px;color:#858585;">LK003</span>
<span class="t" style="left:245.48px;top:396.20px;letter-spacing:-0.330px;color:#858585;">289.36</span>
<span class="t" style="left:304.80px;top:396.20px;letter-spacing:-0.162px;color:#858585;">9.34</span>
<span class="t" style="left:368.88px;top:396.20px;letter-spacing:-0.330px;color:#858585;">82.921</span>
<span class="t" style="left:622.90px;top:397.00px;letter-spacing:-0.471px;color:#454545;">Deviation Rates...</span>
<span class="t" style="left:719.20px;top:397.00px;letter-spacing:-0.380px;color:#333;">Navi runs ...</span>
<span class="t" style="left:186.73px;top:413.70px;font-weight:bold;color:#000;">4</span>
<span class="t" style="left:197.50px;top:413.70px;letter-spacing:-0.796px;color:#858585;">LK004</span>
<span class="t" style="left:245.48px;top:413.70px;letter-spacing:-0.330px;color:#858585;">292.08</span>
<span class="t" style="left:304.80px;top:413.70px;letter-spacing:-0.162px;color:#858585;">9.72</span>
<span class="t" style="left:368.88px;top:413.70px;letter-spacing:-0.330px;color:#858585;">79.705</span>
<span class="t" style="left:622.90px;top:414.50px;letter-spacing:-0.471px;color:#454545;">Deviation Rates...</span>
<span class="t" style="left:719.20px;top:414.50px;letter-spacing:-0.380px;color:#333;">Navi runs ...</span>
<span class="t" style="left:186.73px;top:431.20px;font-weight:bold;color:#000;">5</span>
<span class="t" style="left:197.50px;top:431.20px;letter-spacing:-0.796px;color:#858585;">LK005</span>
<span class="t" style="left:245.48px;top:431.20px;letter-spacing:-0.330px;color:#858585;">291.97</span>
<span class="t" style="left:304.80px;top:431.20px;letter-spacing:-0.162px;color:#858585;">2.31</span>
<span class="t" style="left:368.88px;top:431.20px;letter-spacing:-0.330px;color:#858585;">85.794</span>
<span class="t" style="left:622.90px;top:432.00px;letter-spacing:-0.471px;color:#454545;">Deviation Rates...</span>
<span class="t" style="left:719.20px;top:432.00px;letter-spacing:-0.380px;color:#333;">Navi runs ...</span>
<span class="t" style="left:186.73px;top:448.70px;font-weight:bold;color:#000;">6</span>
<span class="t" style="left:197.50px;top:448.70px;letter-spacing:-0.796px;color:#858585;">LK006</span>
<span class="t" style="left:245.48px;top:448.70px;letter-spacing:-0.330px;color:#858585;">294.65</span>
<span class="t" style="left:304.80px;top:448.70px;letter-spacing:-0.162px;color:#858585;">2.39</span>
<span class="t" style="left:368.88px;top:448.70px;letter-spacing:-0.202px;color:#858585;">82.711</span>
<span class="t" style="left:622.90px;top:449.50px;letter-spacing:-0.471px;color:#454545;">Deviation Rates...</span>
<span class="t" style="left:719.20px;top:449.50px;letter-spacing:-0.380px;color:#333;">Navi runs ...</span>
<span class="t" style="left:186.73px;top:466.20px;font-weight:bold;color:#000;">7</span>
<span class="t" style="left:197.50px;top:466.20px;letter-spacing:-0.796px;color:#858585;">LK007</span>
<span class="t" style="left:250.40px;top:466.20px;letter-spacing:-0.236px;color:#858585;">293.2</span>
<span class="t" style="left:299.95px;top:466.20px;letter-spacing:0.153px;color:#858585;">-4.27</span>
<span class="t" style="left:368.88px;top:466.20px;letter-spacing:-0.330px;color:#858585;">88.018</span>
<span class="t" style="left:622.90px;top:467.00px;letter-spacing:-0.471px;color:#454545;">Deviation Rates...</span>
<span class="t" style="left:719.20px;top:467.00px;letter-spacing:-0.380px;color:#333;">Navi runs ...</span>
<span class="t" style="left:186.73px;top:483.70px;font-weight:bold;color:#000;">8</span>
<span class="t" style="left:197.50px;top:483.70px;letter-spacing:-0.796px;color:#858585;">LK008</span>
<span class="t" style="left:245.48px;top:483.70px;letter-spacing:-0.330px;color:#858585;">297.91</span>
<span class="t" style="left:299.95px;top:483.70px;letter-spacing:0.153px;color:#858585;">-4.22</span>
<span class="t" style="left:368.88px;top:483.70px;letter-spacing:-0.330px;color:#858585;">88.952</span>
<span class="t" style="left:622.90px;top:484.50px;letter-spacing:-0.471px;color:#454545;">Deviation Rates...</span>
<span class="t" style="left:719.20px;top:484.50px;letter-spacing:-0.380px;color:#333;">Navi runs ...</span>
<span class="t" style="left:186.73px;top:501.20px;font-weight:bold;color:#000;">9</span>
<span class="t" style="left:197.50px;top:501.20px;letter-spacing:-0.796px;color:#858585;">LK009</span>
<span class="t" style="left:245.48px;top:501.20px;letter-spacing:-0.330px;color:#858585;">298.27</span>
<span class="t" style="left:295.10px;top:501.20px;letter-spacing:-0.017px;color:#858585;">-10.48</span>
<span class="t" style="left:368.88px;top:501.20px;letter-spacing:-0.330px;color:#858585;">90.981</span>
<span class="t" style="left:622.90px;top:502.00px;letter-spacing:-0.471px;color:#454545;">Deviation Rates...</span>
<span class="t" style="left:719.20px;top:502.00px;letter-spacing:-0.380px;color:#333;">Navi runs ...</span>
<span class="t" style="left:184.20px;top:518.70px;letter-spacing:-0.334px;font-weight:bold;color:#000;">10</span>
<span class="t" style="left:197.50px;top:518.70px;letter-spacing:-0.796px;color:#858585;">LK010</span>
<span class="t" style="left:245.48px;top:518.70px;letter-spacing:-0.330px;color:#858585;">296.21</span>
<span class="t" style="left:299.95px;top:518.70px;letter-spacing:-0.306px;color:#858585;">18.66</span>
<span class="t" style="left:373.80px;top:518.70px;letter-spacing:-0.236px;color:#858585;">73.29</span>
<span class="t" style="left:622.90px;top:519.50px;letter-spacing:-0.471px;color:#454545;">Deviation Rates...</span>
<span class="t" style="left:719.20px;top:519.50px;letter-spacing:-0.380px;color:#333;">Navi runs ...</span>
<span class="t" style="left:184.20px;top:536.20px;letter-spacing:-0.045px;font-weight:bold;color:#000;">11</span>
<span class="t" style="left:197.50px;top:536.20px;letter-spacing:-0.643px;color:#858585;">LK011</span>
<span class="t" style="left:245.48px;top:536.20px;letter-spacing:-0.330px;color:#858585;">292.96</span>
<span class="t" style="left:299.95px;top:536.20px;letter-spacing:-0.306px;color:#858585;">17.94</span>
<span class="t" style="left:368.88px;top:536.20px;letter-spacing:-0.330px;color:#858585;">76.135</span>
<span class="t" style="left:622.90px;top:537.00px;letter-spacing:-0.471px;color:#454545;">Deviation Rates...</span>
<span class="t" style="left:719.20px;top:537.00px;letter-spacing:-0.380px;color:#333;">Navi runs ...</span>
<span class="t" style="left:184.20px;top:553.70px;letter-spacing:-0.334px;font-weight:bold;color:#000;height:5.60px;overflow:hidden;">12</span>
<span class="t" style="left:197.50px;top:553.70px;letter-spacing:-0.796px;color:#858585;height:5.60px;overflow:hidden;">LK012</span>
<span class="t" style="left:245.48px;top:553.70px;letter-spacing:-0.330px;color:#858585;height:5.60px;overflow:hidden;">295.02</span>
<span class="t" style="left:304.80px;top:553.70px;letter-spacing:-0.162px;color:#858585;height:5.60px;overflow:hidden;">19.1</span>
<span class="t" style="left:368.88px;top:553.70px;letter-spacing:-0.330px;color:#858585;height:5.60px;overflow:hidden;">76.681</span>
<span class="t" style="left:622.90px;top:554.50px;letter-spacing:-0.471px;color:#454545;height:5.60px;overflow:hidden;">Deviation Rates...</span>
<span class="t" style="left:719.20px;top:554.50px;letter-spacing:-0.380px;color:#333;height:5.60px;overflow:hidden;">Navi runs ...</span>
<span class="t" style="left:812.50px;top:579.60px;letter-spacing:-0.727px;">Cancel</span>
</body></html>
